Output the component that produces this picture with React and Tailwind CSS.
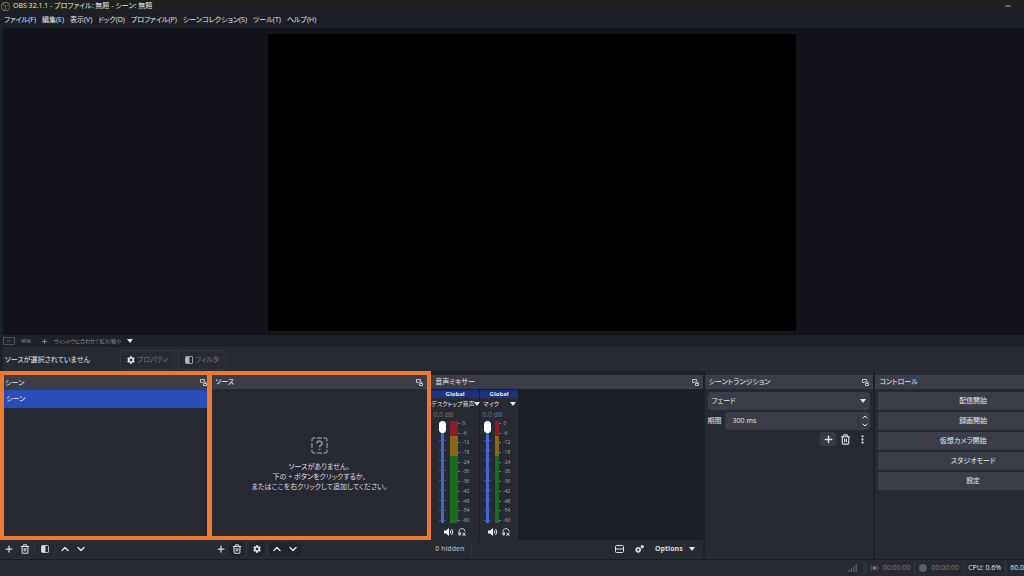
import { useState } from "react";
import { ChevronDown, ChevronUp, EllipsisVertical, Minus, Plus, Trash2 } from "lucide-react";
import { FaCog } from "react-icons/fa";
import { SiObsstudio } from "react-icons/si";

const menus = [
  "ファイル(F)",
  "編集(E)",
  "表示(V)",
  "ドック(D)",
  "プロファイル(P)",
  "シーンコレクション(S)",
  "ツール(T)",
  "ヘルプ(H)",
];

const levels = ["0", "-6", "-12", "-18", "-24", "-30", "-36", "-42", "-48", "-54", "-60"];

const PopOutIcon = () => (
  <svg viewBox="0 0 7 7" className="h-[7px] w-[7px]" fill="none" stroke="currentColor">
    <path d="M2.500 3.500H.5v-3h4v1.500" />
    <path d="M2.500 3h3.500v1.500M3.500 4.500h3v2h-3z" />
  </svg>
);

const FilterIcon = () => (
  <svg viewBox="0 0 9 9" className="h-2 w-2" fill="none" stroke="currentColor">
    <rect x=".5" y=".5" width="8" height="8" rx="1" />
    <path d="M1 1h4v7H1z" fill="currentColor" stroke="none" />
  </svg>
);

const Triangle = () => (
  <svg viewBox="0 0 6 4" className="h-1 w-1.5 shrink-0" fill="#e6e7ea">
    <path d="M0 0h6L3 4z" />
  </svg>
);

const SpeakerIcon = () => (
  <svg viewBox="0 0 10 8" className="h-2 w-2.5" fill="none" stroke="#eeeff2">
    <path d="M0 2.500h2L5 0v8L2 5.500H0z" fill="#eeeff2" stroke="none" />
    <path d="M6.200 2.500q1.200 1.500 0 3M7.600 1q2.400 3 0 6" />
  </svg>
);

const MonitorIcon = () => (
  <svg viewBox="0 0 8 8" className="h-2 w-2" fill="none" stroke="#c3c5cb">
    <path d="M1 7V3.500Q1 .5 4 .5t3 3V4M1 4.500h1.500V7H1z" />
    <path d="M4.500 4.800l3 3M7.500 4.800l-3 3" stroke="#fff" />
  </svg>
);

const MissingIcon = () => (
  <svg viewBox="0 0 17 17" className="h-[17px] w-[17px]" fill="none" stroke="#83868e" strokeWidth="1.400">
    <path d="M1 4.500V3q0-2 2-2h1.500M6 1h5M12.500 1H14q2 0 2 2v1.500M16 6v5M16 12.500V14q0 2-2 2h-1.500M11 16H6M4.500 16H3q-2 0-2-2v-1.500M1 11V6" />
    <path d="M6 6.500Q6 4.200 8.500 4.200T11 6.500q0 1.200-1.300 1.900Q8.500 9 8.500 10.200M8.500 11.700v1.500" strokeWidth="1.800" />
  </svg>
);

const IconButton = ({ label, className = "", children }) => (
  <button aria-label={label} className={`flex h-3.5 w-4 items-center justify-center rounded-sm ${className}`}>
    {children}
  </button>
);

const Separator = () => <span className="ml-px mr-0.5 h-3.5 w-px bg-[#31343e]" />;

const DockHeader = ({ title, popOut = true }) => (
  <header className="flex h-3.5 shrink-0 items-center justify-between bg-[#3b3e49] pl-1 pr-1">
    <h2>{title}</h2>
    {popOut && (
      <button aria-label={`${title} ポップアウト`} className="text-[#c3c5cb]">
        <PopOutIcon />
      </button>
    )}
  </header>
);

const Toolbar = ({ children }) => (
  <div className="flex h-5 shrink-0 items-center border-b border-[#1b1d24] bg-[#272a33] px-px pb-0.5 text-[#dcdde1]">
    {children}
  </div>
);

const Channel = ({ name, className, heading = "", faders, meter }) => {
  const [volume, setVolume] = useState(100);

  return (
    <div className={`flex min-h-0 flex-col bg-[#272a33] ${className}`}>
      <div className="h-2 shrink-0 bg-[#1b3083] text-center text-[6px] font-bold leading-2">Global</div>
      <button className={`flex h-3 shrink-0 items-center justify-between whitespace-nowrap pr-0.5 text-[6px] ${heading}`}>
        {name}
        <Triangle />
      </button>
      <div className="h-2.5 shrink-0 pl-0.5 text-[7px] leading-2.5 text-[#6f727b]">0.0 dB</div>
      <div className={`flex min-h-0 flex-1 pb-px pt-px ${faders}`}>
        <input
          type="range"
          aria-label={name}
          value={volume}
          onChange={(e) => setVolume(e.target.value)}
          className="h-full min-h-0 w-[7px] appearance-none bg-[linear-gradient(90deg,transparent_2px,#4667cf_2px,#4667cf_5px,transparent_5px),repeating-linear-gradient(transparent_0_9px,#3c4f8c_9px_10px)] [direction:rtl] [writing-mode:vertical-lr] [&::-webkit-slider-thumb]:h-3 [&::-webkit-slider-thumb]:w-[7px] [&::-webkit-slider-thumb]:appearance-none [&::-webkit-slider-thumb]:rounded-sm [&::-webkit-slider-thumb]:bg-white"
        />
        <div
          className={`ml-1 bg-[linear-gradient(#8b1c27_0_15%,#86681a_15%_34%,#1c6b22_34%)] ${meter}`}
        />
        <ul className="flex flex-col justify-between text-[5px] leading-[5px] text-[#a5a7ae]">
          {levels.map((level) => (
            <li key={level} className="flex items-center gap-0.5">
              <span className="h-px w-0.5 bg-[#70737c]" />
              {level}
            </li>
          ))}
        </ul>
      </div>
      <div className="flex h-4 shrink-0 items-center justify-center gap-1">
        <button aria-label={`${name} ミュート`}>
          <SpeakerIcon />
        </button>
        <button aria-label={`${name} モニタリング`}>
          <MonitorIcon />
        </button>
      </div>
    </div>
  );
};

const ScenesDock = () => (
  <section className="flex flex-[212_1_0] flex-col">
    <div className="flex flex-1 flex-col border-4 border-r-5 border-[#ee7a31] bg-[#272a33]">
      <header className="flex h-[15px] shrink-0 items-center justify-between bg-[#3b3e49] pl-px">
        <h2>シーン</h2>
        <button aria-label="シーン ポップアウト" className="text-[#c3c5cb]">
          <PopOutIcon />
        </button>
      </header>
      <ul>
        <li>
          <button className="h-[18px] w-full bg-[#284cb8] pl-0.5 text-left">シーン</button>
        </li>
      </ul>
    </div>
    <Toolbar>
      <IconButton label="シーンを追加"><Plus size={10} strokeWidth={3} /></IconButton>
      <IconButton label="シーンを削除"><Trash2 size={10} strokeWidth={2.5} /></IconButton>
      <Separator />
      <IconButton label="シーンフィルタ"><FilterIcon /></IconButton>
      <Separator />
      <IconButton label="上へ移動"><ChevronUp size={12} strokeWidth={3} /></IconButton>
      <IconButton label="下へ移動"><ChevronDown size={12} strokeWidth={3} /></IconButton>
    </Toolbar>
  </section>
);

const SourcesDock = () => (
  <section className="flex flex-[220_1_0] flex-col">
    <div className="flex flex-1 flex-col border-4 border-l-0 border-[#ee7a31] bg-[#272a33]">
      <DockHeader title="ソース" />
      <div className="flex flex-1 flex-col items-center justify-center pt-1 text-center leading-2.5">
        <MissingIcon />
        <p className="mt-2 whitespace-nowrap text-[#dcdde1]">
          ソースがありません。
          <br />
          下の + ボタンをクリックするか、
          <br />
          またはここを右クリックして追加してください。
        </p>
      </div>
    </div>
    <Toolbar>
      <IconButton label="ソースを追加"><Plus size={10} strokeWidth={3} /></IconButton>
      <IconButton label="ソースを削除" className="bg-[#21242c]"><Trash2 size={10} strokeWidth={2.5} /></IconButton>
      <Separator />
      <IconButton label="ソースのプロパティ" className="bg-[#21242c]"><FaCog size={8} /></IconButton>
      <Separator />
      <IconButton label="上へ移動" className="bg-[#21242c]"><ChevronUp size={12} strokeWidth={3} /></IconButton>
      <IconButton label="下へ移動" className="bg-[#21242c]"><ChevronDown size={12} strokeWidth={3} /></IconButton>
    </Toolbar>
  </section>
);

const MixerDock = () => (
  <section className="flex flex-[272_1_0] flex-col pt-1">
    <DockHeader title="音声ミキサー" />
    <div className="flex min-h-0 flex-1 gap-px bg-[#1c1f26] pt-px">
      <Channel name="デスクトップ音声" className="w-12" faders="pl-2" meter="w-2" />
      <Channel name="マイク" className="w-[38px]" heading="pl-[3px]" faders="pl-1" meter="w-1" />
    </div>
    <div className="flex h-5 shrink-0 items-center border-b border-[#1b1d24] bg-[#272a33] pb-0.5 text-[#dcdde1]">
      <button className="h-4 border-r border-[#31343e] px-1 pr-1.5 font-semibold text-[#a5a7ae]">0 hidden</button>
      <div className="ml-auto flex items-center gap-1">
        <IconButton label="レイアウト">
          <svg viewBox="0 0 9 8" className="h-2 w-[9px]" fill="none" stroke="currentColor">
            <rect x=".5" y=".5" width="8" height="7" rx="1" />
            <path d="M1 4h7" />
          </svg>
        </IconButton>
        <IconButton label="オーディオの詳細">
          <svg viewBox="0 0 9 8" className="h-2 w-[9px]" fill="none" stroke="currentColor">
            <circle cx="3.200" cy="4.800" r="2" strokeWidth="1.800" />
            <circle cx="7.300" cy="1.700" r=".9" strokeWidth="1.400" />
          </svg>
        </IconButton>
        <button className="ml-1 mr-2 flex items-center gap-1.5 font-bold">
          Options
          <Triangle />
        </button>
      </div>
    </div>
  </section>
);

const TransitionsDock = () => (
  <section className="ml-0.5 flex flex-[169_1_0] flex-col border-b border-[#1b1d24] bg-[#272a33] pt-1">
    <DockHeader title="シーントランジション" />
    <div className="px-[3px] pt-[3px]">
      <div className="flex items-center rounded-sm bg-[#3b3e49] pr-1">
        <select aria-label="トランジション" className="h-[18px] flex-1 appearance-none pl-1">
          <option>フェード</option>
        </select>
        <Triangle />
      </div>
      <div className="mt-0.5 flex items-center">
        <label htmlFor="duration" className="w-[17px] whitespace-nowrap">期間</label>
        <div className="flex h-[18px] flex-1 items-center rounded-sm bg-[#3b3e49] pl-2">
          <input id="duration" defaultValue="300 ms" className="w-0 flex-1 outline-none" />
          <div className="flex w-3 flex-col items-center border-l border-[#31343e]">
            <button aria-label="増やす"><ChevronUp size={8} strokeWidth={3} /></button>
            <button aria-label="減らす"><ChevronDown size={8} strokeWidth={3} /></button>
          </div>
        </div>
      </div>
      <div className="mt-0.5 flex justify-end gap-px text-[#dcdde1]">
        <IconButton label="トランジションを追加" className="bg-[#363944]"><Plus size={11} strokeWidth={3} /></IconButton>
        <IconButton label="トランジションを削除"><Trash2 size={11} strokeWidth={2.5} /></IconButton>
        <IconButton label="メニュー"><EllipsisVertical size={11} strokeWidth={3} /></IconButton>
      </div>
    </div>
  </section>
);

const ControlsDock = () => (
  <section className="ml-0.5 flex flex-[149_1_0] flex-col border-b border-[#1b1d24] bg-[#272a33] pt-1">
    <DockHeader title="コントロール" popOut={false} />
    <div className="flex flex-col gap-0.5 pl-[3px] pt-[3px]">
      <button className="h-[18px] bg-[#3b3e49] pl-11">配信開始</button>
      <button className="h-[18px] bg-[#3b3e49] pl-11">録画開始</button>
      <button className="h-[18px] bg-[#3b3e49] pl-6">仮想カメラ開始</button>
      <button className="h-[18px] bg-[#3b3e49] pl-11">スタジオモード</button>
      <button className="h-[18px] bg-[#3b3e49] pl-11">設定</button>
    </div>
  </section>
);

const StatusBar = () => (
  <footer className="flex h-4 shrink-0 items-center justify-end bg-[#272a33] text-[#777a83]">
    <svg viewBox="0 0 9 8" className="mr-2 h-2 w-[9px]" fill="#555862">
      <path d="M0 6h1.500v2H0zM2.500 4H4v4H2.500zM5 2h1.500v6H5zM7.500 0H9v8H7.500z" />
    </svg>
    <span className="flex items-center gap-1 border-l border-[#363944] px-1">
      <svg viewBox="0 0 9 8" className="h-2 w-[9px]" fill="none" stroke="#555862">
        <circle cx="4.500" cy="4" r="1.500" fill="#777a83" stroke="#777a83" />
        <path d="M1.500 1.500q-1.500 2.500 0 5M7.500 1.500q1.500 2.500 0 5" />
      </svg>
      00:00:00
    </span>
    <span className="flex items-center gap-1 border-l border-[#363944] px-1">
      <span className="h-2 w-2 rounded-full bg-[#5b5e68]" />
      00:00:00
    </span>
    <span className="border-l border-[#363944] px-1 text-[#e6e7ea]">CPU: 0.6%</span>
    <span className="border-l border-[#363944] pl-1 text-[#e6e7ea]">60.0</span>
  </footer>
);

const App = () => {
  return (
    <div className="flex h-screen flex-col overflow-hidden bg-[#1f2129] font-['Open_Sans','Noto_Sans_CJK_JP',sans-serif] text-[7px] leading-3 text-[#e6e7ea] [font-feature-settings:'palt']">
      <div className="flex h-3 shrink-0 items-center bg-[#202020] pl-px">
        <SiObsstudio size={9} className="mr-[3px] text-[#a5a7ae]" />
        <h1>OBS 32.1.1 - プロファイル: 無題 - シーン: 無題</h1>
        <button aria-label="最小化" className="ml-auto mr-3">
          <Minus size={8} />
        </button>
      </div>
      <nav className="flex h-4 shrink-0 items-center gap-1.5 bg-[#1d1f28] pl-1">
        {menus.map((menu) => (
          <button key={menu}>{menu}</button>
        ))}
      </nav>
      <main className="ml-[3px] flex min-h-0 flex-1 justify-center bg-[#13141b] pb-1 pl-9 pt-1.5">
        <div className="aspect-video h-full bg-black" />
      </main>
      <div className="flex h-3 shrink-0 items-center pl-[3px] text-[5px] text-[#8d9098]">
        <button aria-label="縮小" className="flex h-2 w-3 items-center justify-center border border-[#4b4e58]">
          <Minus size={6} />
        </button>
        <span className="ml-1.5 w-4">49%</span>
        <button aria-label="拡大" className="ml-1">
          <Plus size={7} strokeWidth={3} />
        </button>
        <button className="ml-1.5 flex items-center gap-1.5 whitespace-nowrap">
          ウィンドウに合わせて拡大/縮小
          <Triangle />
        </button>
      </div>
      <div className="ml-[3px] flex h-6 shrink-0 items-center gap-[3px] bg-[#272a33] pl-0.5 pt-px">
        <span className="w-28">ソースが選択されていません</span>
        <button className="flex h-5 items-center gap-0.5 border border-[#31343e] px-1.5 text-[#72757e]">
          <FaCog size={8} className="text-[#dcdde1]" />
          プロパティ
        </button>
        <button className="flex h-5 items-center gap-0.5 border border-[#31343e] px-1.5 text-[#72757e]">
          <span className="text-[#b3b5bb]"><FilterIcon /></span>
          フィルタ
        </button>
      </div>
      <div className="flex h-[189px] shrink-0">
        <ScenesDock />
        <SourcesDock />
        <MixerDock />
        <TransitionsDock />
        <ControlsDock />
      </div>
      <StatusBar />
    </div>
  );
};

export default App;
